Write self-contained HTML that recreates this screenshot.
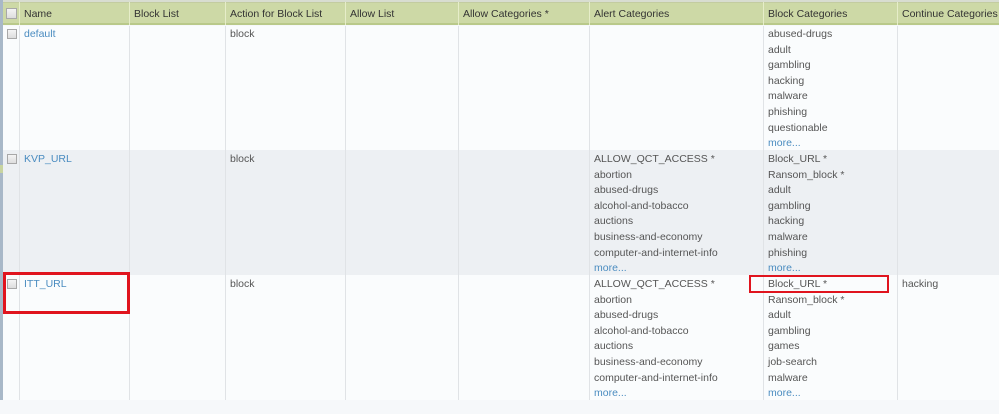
<!DOCTYPE html>
<html><head><meta charset="utf-8"><style>
*{margin:0;padding:0;box-sizing:border-box}
body{width:999px;height:414px;overflow:hidden;background:#f6f8fa;font-family:"Liberation Sans","DejaVu Sans",sans-serif;font-size:10.5px;color:#555;position:relative}
.a{position:absolute}
.hdr{left:0;top:2px;width:999px;height:23px;background:#cdd9a6;border-bottom:2px solid #b9c98a;border-top:1px solid #c3cca0}
.topline{left:0;top:0;width:999px;height:2px;background:#d8ddd0}
.row{left:3px;width:996px;height:125px}
.vl{width:1px;background:#e0e3e6}
.hv{width:1px;background:#e6edc9;top:2px;height:23px}
.t{position:absolute;line-height:15.6px;white-space:nowrap}
.h{color:#333;font-size:10.5px}
.lnk{color:#4a8cc0}
.cb{position:absolute;width:10px;height:10px;border:1px solid #a8a8a8;background:linear-gradient(#f4f4f4,#ddd)}
.red{position:absolute;border:3px solid #e0141e}
</style></head><body>
<div class="a topline"></div>
<div class="a hdr"></div>
<div class="a" style="left:0;top:0;width:3px;height:400px;background:#a8b8c8"></div>
<div class="a row" style="top:26px;background:#fafcfd"></div>
<div class="a row" style="top:150px;background:#edf0f3"></div>
<div class="a row" style="top:275px;background:#fafcfd;height:125px"></div>
<div class="a" style="left:0;top:165px;width:3px;height:8px;background:#c8d4a0"></div>
<div class="a vl" style="left:19px;top:26px;height:374px"></div>
<div class="a vl" style="left:129px;top:26px;height:374px"></div>
<div class="a vl" style="left:225px;top:26px;height:374px"></div>
<div class="a vl" style="left:345px;top:26px;height:374px"></div>
<div class="a vl" style="left:458px;top:26px;height:374px"></div>
<div class="a vl" style="left:589px;top:26px;height:374px"></div>
<div class="a vl" style="left:763px;top:26px;height:374px"></div>
<div class="a vl" style="left:897px;top:26px;height:374px"></div>
<div class="a hv" style="left:19px"></div><div class="a hv" style="left:129px"></div><div class="a hv" style="left:225px"></div><div class="a hv" style="left:345px"></div><div class="a hv" style="left:458px"></div><div class="a hv" style="left:589px"></div><div class="a hv" style="left:763px"></div><div class="a hv" style="left:897px"></div>
<div class="cb" style="left:6px;top:8px;width:11px;height:11px"></div>
<div class="t h" style="left:24px;top:7px">Name</div>
<div class="t h" style="left:134px;top:7px">Block List</div>
<div class="t h" style="left:230px;top:7px">Action for Block List</div>
<div class="t h" style="left:350px;top:7px">Allow List</div>
<div class="t h" style="left:463px;top:7px">Allow Categories *</div>
<div class="t h" style="left:594px;top:7px">Alert Categories</div>
<div class="t h" style="left:768px;top:7px">Block Categories</div>
<div class="t h" style="left:902px;top:7px">Continue Categories</div>
<div class="cb" style="left:7px;top:29px"></div>
<div class="t lnk" style="left:24px;top:27px">default</div>
<div class="t" style="left:230px;top:27px">block</div>
<div class="t" style="left:768px;top:27px">abused-drugs<br>adult<br>gambling<br>hacking<br>malware<br>phishing<br>questionable<br><span class="lnk">more...</span></div>
<div class="cb" style="left:7px;top:154px"></div>
<div class="t lnk" style="left:24px;top:152px">KVP_URL</div>
<div class="t" style="left:230px;top:152px">block</div>
<div class="t" style="left:594px;top:152px">ALLOW_QCT_ACCESS *<br>abortion<br>abused-drugs<br>alcohol-and-tobacco<br>auctions<br>business-and-economy<br>computer-and-internet-info<br><span class="lnk">more...</span></div>
<div class="t" style="left:768px;top:152px">Block_URL *<br>Ransom_block *<br>adult<br>gambling<br>hacking<br>malware<br>phishing<br><span class="lnk">more...</span></div>
<div class="cb" style="left:7px;top:279px"></div>
<div class="t lnk" style="left:24px;top:277px">ITT_URL</div>
<div class="t" style="left:230px;top:277px">block</div>
<div class="t" style="left:594px;top:277px">ALLOW_QCT_ACCESS *<br>abortion<br>abused-drugs<br>alcohol-and-tobacco<br>auctions<br>business-and-economy<br>computer-and-internet-info<br><span class="lnk">more...</span></div>
<div class="t" style="left:768px;top:277px">Block_URL *<br>Ransom_block *<br>adult<br>gambling<br>games<br>job-search<br>malware<br><span class="lnk">more...</span></div>
<div class="t" style="left:902px;top:277px">hacking</div>
<div class="red" style="left:3px;top:272px;width:127px;height:42px"></div>
<div class="red" style="left:749px;top:275px;width:140px;height:18px;border-width:2px"></div>
</body></html>
